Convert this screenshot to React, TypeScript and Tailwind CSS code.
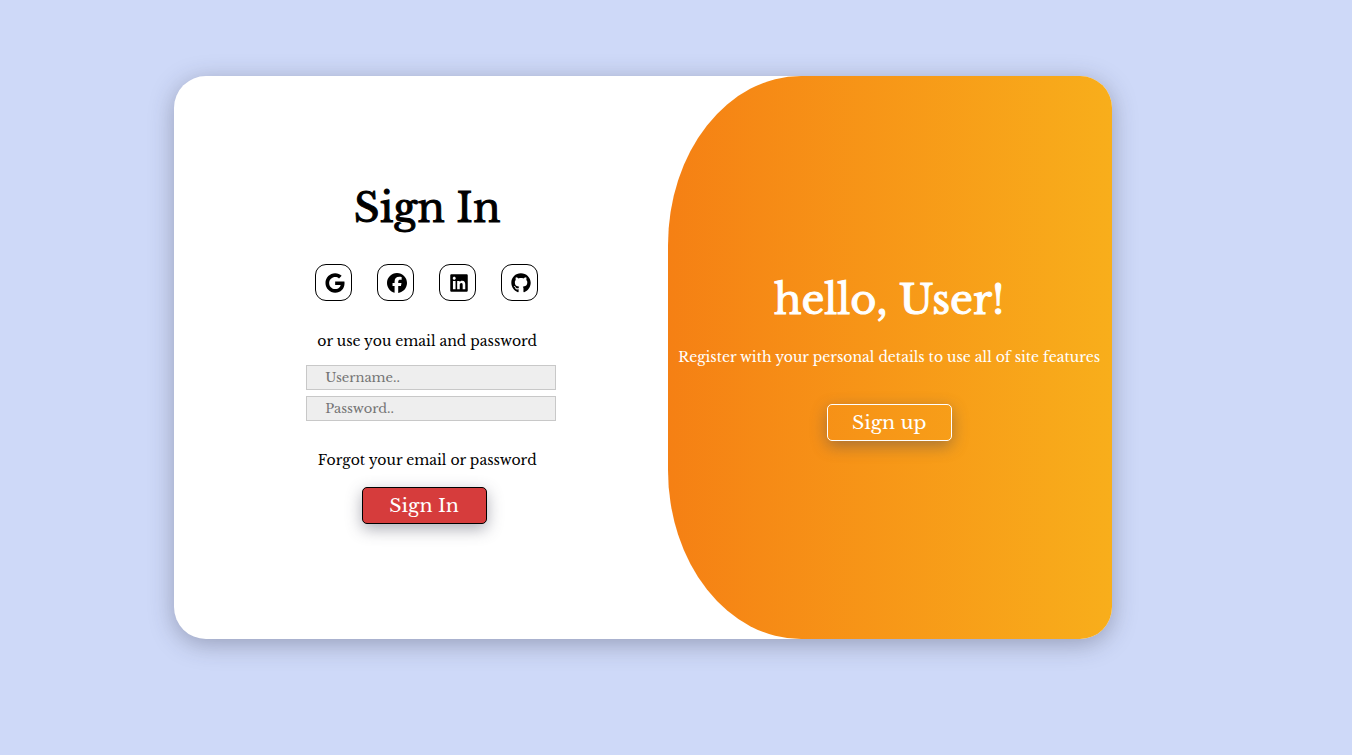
import { FaFacebook, FaGithub, FaGoogle, FaLinkedin } from "react-icons/fa6";

const socials = [
  { label: "Google", Icon: FaGoogle },
  { label: "Facebook", Icon: FaFacebook },
  { label: "LinkedIn", Icon: FaLinkedin },
  { label: "GitHub", Icon: FaGithub },
];

function Field({ label, type }: { label: string; type: string }) {
  return (
    <input
      type={type}
      aria-label={label}
      placeholder={`${label}..`}
      className="h-[25px] w-[250px] border border-[#c8c8c8] bg-[#eeeeee] pl-[18px] text-[13px] leading-5 text-black outline-none placeholder:text-[#757575]"
    />
  );
}

export default function App() {
  return (
    <main className="min-h-screen bg-[#ced9f8] pt-[76px] pr-[240px] pb-[76px] pl-[174px] font-['Libre_Baskerville','Liberation_Serif',serif] text-black">
      <div className="flex min-h-[563px] overflow-hidden rounded-[32px] bg-white shadow-[0_5px_24px_rgba(50,50,70,0.35)]">
        <form
          className="flex flex-1 flex-col items-center pt-[102px] pl-3"
          onSubmit={(e) => e.preventDefault()}
        >
          <h1 className="text-[40px] leading-[60px] [-webkit-text-stroke:1px_currentColor]">
            Sign In
          </h1>
          <div className="mt-[26px] mr-0.5 flex gap-[25px]">
            {socials.map(({ label, Icon }) => (
              <a
                key={label}
                href="#"
                aria-label={label}
                className="flex size-[37px] items-center rounded-[11px] border border-black pt-px pl-[9px]"
              >
                <Icon className="h-5 w-auto" />
              </a>
            ))}
          </div>
          <p className="mt-7 text-[14px] leading-6">or use you email and password</p>
          <div className="mt-3 ml-2 flex flex-col gap-1.5">
            <Field label="Username" type="text" />
            <Field label="Password" type="password" />
          </div>
          <a href="#" className="mt-[27px] text-[14px] leading-6">
            Forgot your email or password
          </a>
          <button
            type="submit"
            className="mt-[15px] mr-1.5 h-[37px] w-[125px] rounded-[5px] border border-black bg-[#d63c3c] text-[19px] leading-6 text-white shadow-[0_5px_16px_rgba(70,70,90,0.45)]"
          >
            Sign In
          </button>
        </form>
        <section className="flex w-[47.3%] flex-col items-center rounded-l-[30%] bg-linear-to-r from-[#f58014] to-[#f8ae1b] pt-[194px] pr-0.5 text-white">
          <h2 className="text-[40px] leading-[60px] [-webkit-text-stroke:1px_currentColor]">
            hello, User!
          </h2>
          <p className="mt-[15px] text-[14px] leading-6 whitespace-nowrap">
            Register with your personal details to use all of site features
          </p>
          <button
            type="button"
            className="mt-[35px] h-[37px] w-[125px] rounded-[5px] border border-white text-[19px] leading-6 shadow-[0_5px_16px_rgba(70,70,90,0.45)]"
          >
            Sign up
          </button>
        </section>
      </div>
    </main>
  );
}
